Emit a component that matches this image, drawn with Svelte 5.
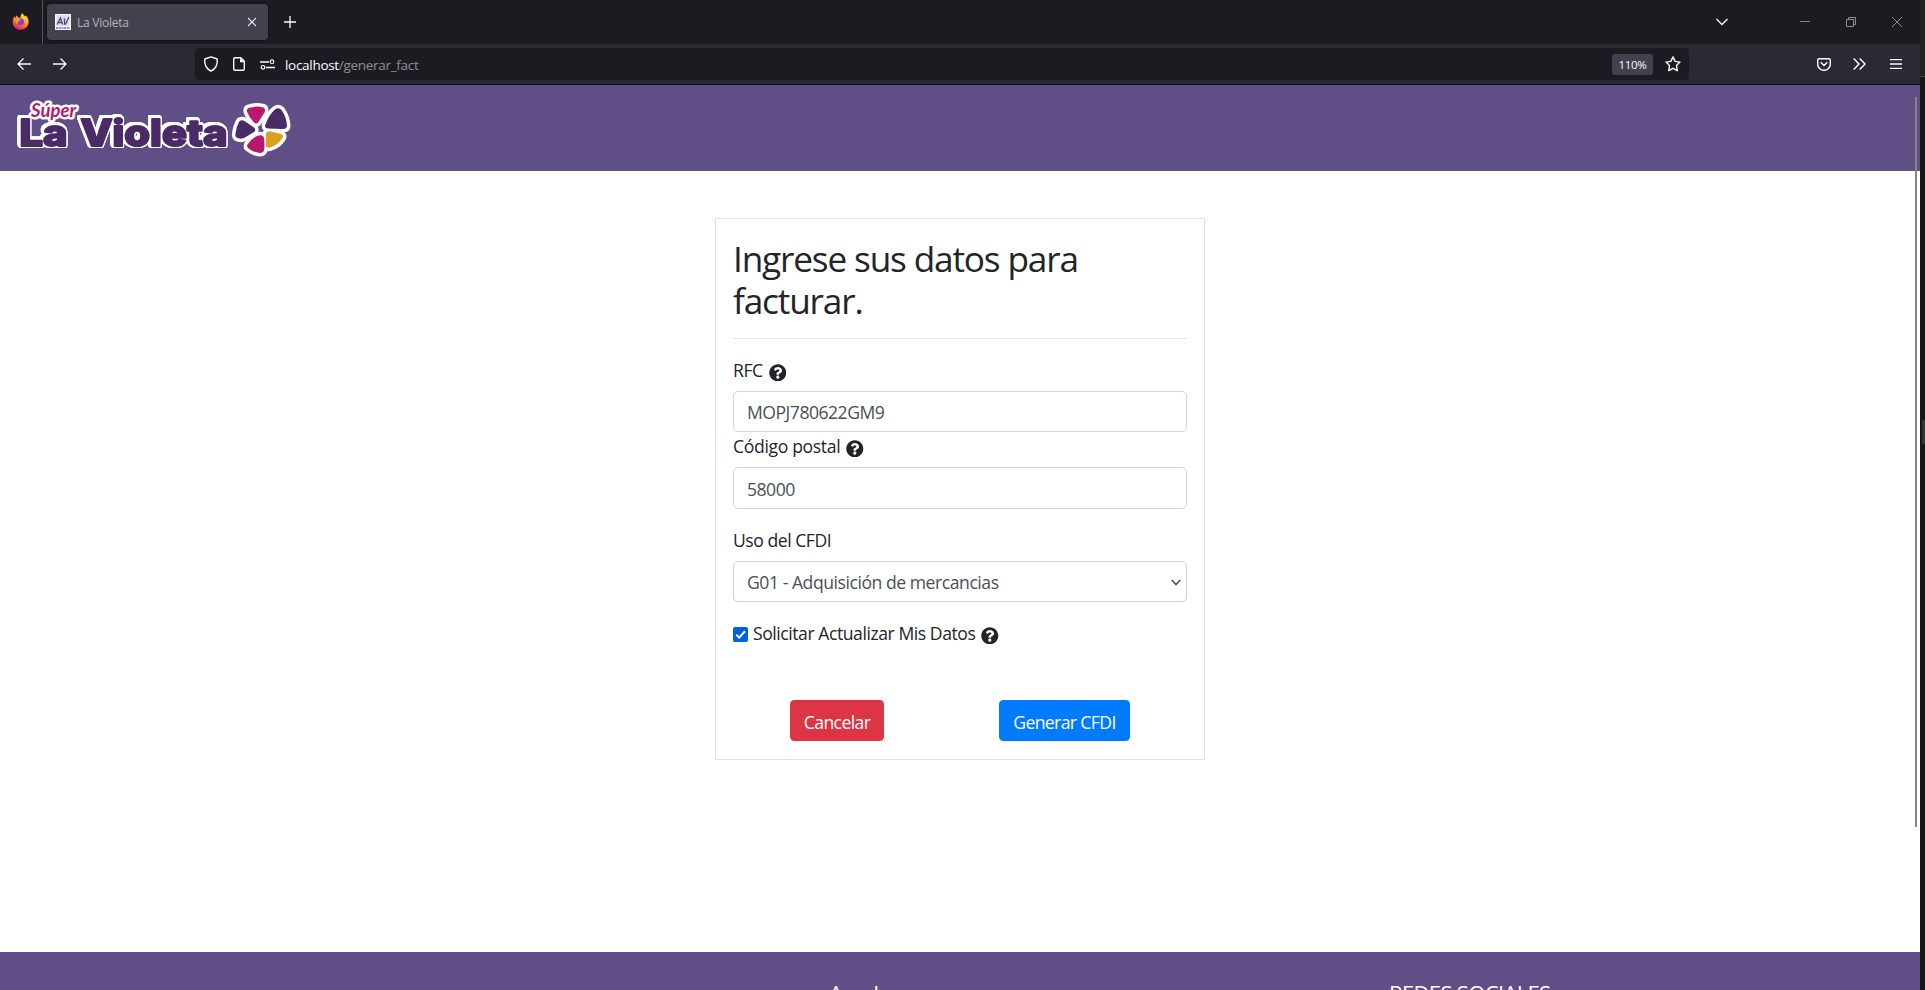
<script>
  let rfc = $state('MOPJ780622GM9');
  let postal = $state('58000');
  let update = $state(true);

  const petals = [
    { color: '#b8186d', d: 'M248.500 23q7.500-2.500 15-.5 2 1 1.300 4.500L258.500 37q-2 2.500-4.500.5-5-5-7-11-.5-2.500 1.500-3.500z' },
    { color: '#4b2a68', d: 'M275 24.500q3.500-2.500 6.500.5 5 7 5.500 15.500 0 3.500-4 3.500l-15-.5q-4-.5-2.500-4 3.500-10 9.500-15z' },
    { color: '#4b2a68', d: 'M239.500 36q2.500-1.500 5 0l9.500 6.500q2.500 2 0 4.500l-10 6q-4 1.500-7.500-.5-1.500-1-1-4 1-7.500 4-12.500z' },
    { color: '#b8186d', d: 'M257.500 50.800q6-1.800 6.500 2.700 1 7 0 12-1 2.500-4.500 2.500-7-1-11.500-5-1.500-1.500-.5-3.500 4-6 10-8.700z' },
    { color: '#daa11b', d: 'M266 49q.5-3 4-2.700l11 2.700q3 1 1.500 4-4.500 7-12.500 9.500-4 1-4-3z' }
  ];
</script>

{#snippet help()}
  <svg class="help" viewBox="0 0 512 512" width="17.6" height="17.6"><path fill="#212529" d="M504 256c0 137-111 248-248 248S8 393 8 256 119 8 256 8s248 111 248 248zM262.700 90c-54.500 0-89.300 23-116.500 63.800-3.500 5.300-2.400 12.400 2.700 16.300l34.700 26.300c5.200 3.900 12.600 3 16.700-2.100 17.900-22.700 30.100-35.800 57.300-35.800 20.400 0 45.700 13.100 45.700 33 0 15-12.400 22.700-32.500 34C247.100 238.500 216 254.900 216 296v4c0 6.600 5.400 12 12 12h56c6.600 0 12-5.400 12-12v-1.300c0-28.500 83.200-29.600 83.200-106.700 0-58-60.200-102-116.500-102zM256 338c-25.400 0-46 20.600-46 46s20.600 46 46 46 46-20.600 46-46-20.600-46-46-46z" /></svg>
{/snippet}

<div class="desktop">
  <div class="window">
    <div class="tabs">
      <div class="pin">
        <svg width="18" height="18" viewBox="0 0 18 18">
          <defs>
            <linearGradient id="fire" x1="0.8" y1="0" x2="0.3" y2="1"><stop offset="0" stop-color="#fff44f" /><stop offset=".4" stop-color="#ffa825" /><stop offset=".75" stop-color="#ff4a4a" /><stop offset="1" stop-color="#e3178a" /></linearGradient>
          </defs>
          <path fill="url(#fire)" d="M10.300 0c.5 1.600 1.600 2.200 2.800 3.400l.5-.8c2.300 2 3.200 4.400 3 7-.3 4-3.500 7.200-7.800 7.200C4.300 16.800.8 13.500.7 9.200.6 7 1.300 5 2.600 3.300l.5 1.600 1.500-2.600c.3 1 .8 1.700 1.700 2.200l2.200.2C8.500 3 9 1.200 10.300 0z" />
          <circle cx="8.700" cy="8.800" r="3.200" fill="#7046d8" />
          <path fill="#ff9a20" d="M3.500 6.200c2-.9 4-.7 5.600.7-1.300.2-1.700 1.300-3 1.500.2 1.200-.2 2-1 2.600-1.500-1.200-2-3-1.600-4.800z" />
        </svg>
      </div>
      <div class="tab">
        <svg class="favicon" width="16" height="16" viewBox="0 0 16 16">
          <rect width="16" height="16" fill="#f7f6fa" /><rect x="1.500" y="1" width="13" height="11" fill="#dedae6" />
          <path d="M2 10.500 5.500 4 7.500 10.500M4 8.500h3M9.500 4.500v5.500h1l3.500-7" fill="none" stroke="#57468a" stroke-width="1.300" />
          <path d="M1 14h14" stroke="#77689e" stroke-width="1.300" stroke-dasharray="2 .7" />
        </svg>
        <span class="tab-title">La Violeta</span>
        <svg class="close" width="10" height="10" viewBox="0 0 10 10"><path d="m1 1 8 8M9 1 1 9" stroke="#e8e8ee" stroke-width="1.100" /></svg>
      </div>
      <svg class="plus" width="12" height="12" viewBox="0 0 12 12"><path d="M6 0v12M0 6h12" stroke="#fbfbfe" stroke-width="1.300" /></svg>
      <div class="controls">
        <svg width="12" height="8" viewBox="0 0 12 8"><path d="m.5 1 5.500 5.500L11.500 1" fill="none" stroke="#f0f0f4" stroke-width="1.400" /></svg>
        <svg class="min" width="10" height="10" viewBox="0 0 10 10"><path d="M0 4.500h10" stroke="#86868a" /></svg>
        <svg class="max" width="10" height="10" viewBox="0 0 10 10"><path d="M.5 2.500h7v7h-7zM2.500 2.500v-2h7v7h-2" fill="none" stroke="#8e8e92" /></svg>
        <svg class="cls" width="10" height="10" viewBox="0 0 10 10"><path d="m0 0 10 10M10 0 0 10" stroke="#8e8e92" /></svg>
      </div>
    </div>
    <div class="toolbar">
      <svg width="14" height="12" viewBox="0 0 14 12"><path d="M14 6H1M6.500.5 1 6l5.500 5.500" fill="none" stroke="#fbfbfe" stroke-width="1.300" /></svg>
      <svg class="fwd" width="14" height="12" viewBox="0 0 14 12"><path d="M0 6h13M7.500.5 13 6l-5.500 5.500" fill="none" stroke="#fbfbfe" stroke-width="1.300" /></svg>
      <div class="urlbar">
        <svg width="16" height="16" viewBox="0 0 16 16"><path d="M8 .8 14.200 3c.5 4.800-1.200 9.600-6.200 12.200C3 12.600 1.300 7.800 1.800 3z" fill="none" stroke="#fbfbfe" stroke-width="1.400" stroke-linejoin="round" /></svg>
        <svg class="page" width="12" height="14" viewBox="0 0 12 14"><path d="M2 .7h5.800l3.500 3.500V12a1.300 1.300 0 0 1-1.300 1.300H2A1.300 1.300 0 0 1 .7 12V2A1.300 1.300 0 0 1 2 .7z" fill="none" stroke="#fbfbfe" stroke-width="1.400" /><path d="M7 .7v4.500h4.500z" fill="#fbfbfe" /></svg>
        <svg class="perm" width="15" height="11" viewBox="0 0 15 11"><path d="M0 3h9M6 8.500h9" stroke="#fbfbfe" stroke-width="1.400" /><circle cx="12" cy="2.700" r="1.800" fill="none" stroke="#fbfbfe" stroke-width="1.200" /><circle cx="3" cy="8.300" r="1.800" fill="none" stroke="#fbfbfe" stroke-width="1.200" /></svg>
        <span class="url">localhost<i>/generar_fact</i></span>
        <span class="zoom">110%</span>
        <svg class="star" width="16" height="16" viewBox="0 0 16 16"><path d="m8 .9 2.100 4.500 4.900.7-3.500 3.500.8 5L8 12.300l-4.300 2.300.8-5L1 6.100l4.900-.7z" fill="none" stroke="#fbfbfe" stroke-width="1.400" stroke-linejoin="round" /></svg>
      </div>
      <div class="tools">
        <svg width="14" height="13" viewBox="0 0 14 13"><path d="M2 .7h10a1.300 1.300 0 0 1 1.300 1.300v4a6.300 6.300 0 0 1-12.600 0V2A1.300 1.300 0 0 1 2 .7zM3.700 4.300 7 7.500l3.300-3.200" fill="none" stroke="#fbfbfe" stroke-width="1.400" /></svg>
        <svg class="more" width="13" height="12" viewBox="0 0 13 12"><path d="M.7.5 6 6 .7 11.500M6.700.5 12 6l-5.300 5.500" fill="none" stroke="#fbfbfe" stroke-width="1.400" /></svg>
        <svg class="burger" width="12" height="10" viewBox="0 0 12 10"><path d="M0 .7h12M0 5h12M0 9.300h12" stroke="#fbfbfe" stroke-width="1.300" /></svg>
      </div>
    </div>

    <header>
      <svg class="logo" width="300" height="86" viewBox="0 0 300 86">
        <g class="word halo">
          <text x="19.500" y="60.500" textLength="48" lengthAdjust="spacingAndGlyphs">La</text>
          <text x="80.500" y="60.500" textLength="147" lengthAdjust="spacingAndGlyphs">Violeta</text>
        </g>
        <text class="super" x="31" y="31.500" textLength="45" lengthAdjust="spacingAndGlyphs">Súper</text>
        <g fill="#fff" stroke="#fff" stroke-width="7" stroke-linejoin="round">
          {#each petals as petal}<path d={petal.d} />{/each}
        </g>
        {#each petals as petal}<path d={petal.d} fill={petal.color} />{/each}
      </svg>
    </header>

    <main>
      <form class="card" onsubmit={(e) => e.preventDefault()}>
        <h1>Ingrese sus datos para<br />facturar.</h1>
        <hr />
        <label class="r1" for="rfc"><span>RFC</span>{@render help()}</label>
        <input id="rfc" class="control" bind:value={rfc} />
        <label class="r2" for="cp"><span class="l-cp">Código postal</span>{@render help()}</label>
        <input id="cp" class="control tall" bind:value={postal} />
        <label class="r3" for="uso"><span>Uso del CFDI</span></label>
        <div class="control select" id="uso"><span>G01 - Adquisición de mercancias</span><svg width="10" height="7" viewBox="0 0 10 7"><path d="m.7 1 4.300 4.500L9.300 1" fill="none" stroke="#495057" stroke-width="1.600" /></svg></div>
        <label class="check">
          <input type="checkbox" bind:checked={update} />
          <svg class="box" width="15" height="15" viewBox="0 0 15 15"><rect width="15" height="15" rx="2" fill="#0060df" />{#if update}<path d="m3.200 7.600 3 3L12 4.300" fill="none" stroke="#fff" stroke-width="2" />{/if}</svg>
          <span class="l-check">Solicitar Actualizar Mis Datos</span>{@render help()}
        </label>
        <div class="actions">
          <button class="danger" type="button">Cancelar</button>
          <button class="primary">Generar CFDI</button>
        </div>
      </form>
    </main>
    <footer><span class="f1">Ayuda</span><span class="f2">REDES SOCIALES</span></footer>
    <div class="scroll"></div>
  </div>
  <div class="edge"><div class="edge-top"></div><div class="edge-tab"></div></div>
</div>

<style>
  :global(body) { margin: 0; overflow: hidden; }
  .desktop, .desktop * { box-sizing: border-box; }
  .desktop { display: flex; width: 1925px; height: 990px; overflow: hidden; background: #181818; font-family: 'Open Sans', 'Noto Sans', sans-serif; }
  svg { display: block; flex: none; }
  .window { position: relative; width: 1920px; height: 990px; display: flex; flex-direction: column; background: #fff; overflow: hidden; }
  .tabs { height: 44px; flex: none; background: #1c1b22; display: flex; align-items: center; }
  .pin { width: 43px; height: 44px; border-right: 1px solid #55545c; padding: 13px 0 0 12px; }
  .tab { width: 221px; height: 36px; margin-left: 4px; border-radius: 4px; background: #42414d; display: flex; align-items: center; padding: 0 11px 0 8px; box-shadow: 0 0 3px #0008; }
  .tab-title { margin-left: 6px; padding-top: 1px; flex: 1; font-size: 12px; color: #b5b4bb; letter-spacing: -.25px; }
  .plus { margin-left: 16px; }
  .controls { margin-left: auto; display: flex; align-items: center; padding-right: 18px; }
  .min { margin-left: 72px; }
  .max, .cls { margin-left: 36px; }
  .toolbar { height: 41px; flex: none; background: #2b2a33; border-bottom: 1px solid #0c0c0d; display: flex; align-items: center; padding-left: 17px; }
  .fwd { margin-left: 22px; }
  .urlbar { width: 1494px; height: 32px; margin-left: 128px; border-radius: 4px; background: #1c1b22; display: flex; align-items: center; padding: 0 8px; }
  .page { margin-left: 14px; }
  .perm { margin-left: 15px; }
  .url { margin-left: 10px; padding-top: 1px; flex: 1; font-size: 13.500px; color: #fbfbfe; letter-spacing: -.3px; }
  .url i { font-style: normal; color: #8f8f96; }
  .zoom { width: 41px; height: 21px; border-radius: 3px; background: #42414d; color: #fbfbfe; font-size: 11.500px; line-height: 22px; text-align: center; letter-spacing: -.3px; }
  .star { margin-left: 12px; }
  .tools { margin-left: auto; display: flex; align-items: center; padding-right: 18px; }
  .more { margin-left: 22px; }
  .burger { margin-left: 24px; }
  header { height: 86px; flex: none; background: #604e87; }
  .word { font: 800 37px 'Inter', sans-serif; fill: #4b2a68; stroke: #4b2a68; stroke-width: 2px; stroke-linejoin: round; }
  .halo { filter: drop-shadow(1.500px 0 #fff) drop-shadow(-1.500px 0 #fff) drop-shadow(0 1.500px #fff) drop-shadow(0 -1.500px #fff) drop-shadow(.9px .9px #fff) drop-shadow(-.9px -.9px #fff); }
  .super { font: italic 700 18px 'Lato', sans-serif; fill: #b8186d; stroke: #fff; stroke-width: 5px; paint-order: stroke; stroke-linejoin: round; }
  main { height: 781px; flex: none; padding: 47px 0 0 715px; }
  .card { width: 490px; height: 542px; border: 1px solid #dee2e6; padding: 17px 17px 0; color: #212529; font-size: 17.600px; line-height: 26px; }
  h1 { margin: 1px 0 0; font-size: 35.200px; line-height: 42.240px; font-weight: 400; letter-spacing: -1.160px; }
  hr { margin: 17px 0 18px; border: 0; border-top: 1px solid #e3e4e6; }
  label { display: flex; align-items: center; height: 26px; letter-spacing: -.48px; }
  .l-cp { letter-spacing: -.35px; }
  .l-check { letter-spacing: -.45px; }
  .help { position: relative; top: 2px; margin-left: 6px; }
  .r1 { margin-bottom: 8px; }
  .r2 { margin: 1px 0 8px; }
  .r3 { margin: 18px 0 8px; }
  .control { display: flex; width: 100%; height: 41px; padding: 1px 13px 0; border: 1px solid #ced4da; border-radius: 5px; font: inherit; color: #495057; background: #fff; letter-spacing: -.5px; outline: 0; }
  .tall { height: 42px; }
  .select { align-items: center; justify-content: space-between; padding-right: 5px; letter-spacing: -.46px; }
  .check { margin-top: 18px; }
  .check input { display: none; }
  .check .box { margin-right: 5px; position: relative; top: 1px; }
  .actions { display: flex; align-items: center; margin-top: 54px; padding-left: 57px; gap: 115px; }
  button { height: 41px; padding: 2px 0 0; border: 0; border-radius: 4.400px; color: #fff; font: inherit; letter-spacing: -.62px; }
  .danger { width: 94px; background: #dc3545; }
  .primary { width: 131px; background: #007bff; }
  footer { height: 38px; flex: none; background: #604e87; color: #fff; font-size: 22px; line-height: 30px; display: flex; padding: 26px 0 0 829px; overflow: hidden; letter-spacing: -.65px; }
  .f1 { width: 560px; }
  .f2 { white-space: nowrap; }
  .scroll { position: absolute; left: 1915px; top: 97px; width: 2px; height: 730px; background: #858585; }
  .edge { width: 5px; height: 990px; background: #161616; }
  .edge-top { height: 77px; background: #22211f; border-bottom: 1px solid #444; }
  .edge-tab { margin: 343px 0 0 2px; height: 24px; background: #333; }
</style>
